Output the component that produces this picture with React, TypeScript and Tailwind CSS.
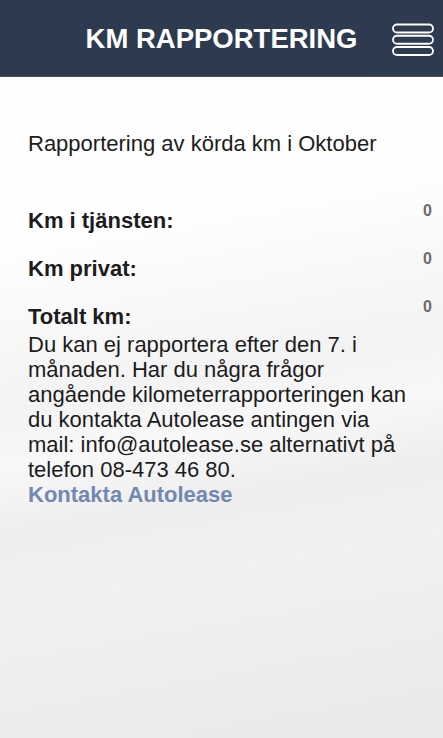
import React from "react";

function Hamburger() {
  return (
    <svg width="42" height="34" viewBox="0 0 42 34" fill="none">
      <rect x="1" y="1.5" width="40" height="8" rx="4" stroke="#ffffff" strokeWidth="1.8" />
      <rect x="1" y="12.75" width="40" height="8" rx="4" stroke="#ffffff" strokeWidth="1.8" />
      <rect x="1" y="24" width="40" height="8" rx="4" stroke="#ffffff" strokeWidth="1.8" />
    </svg>
  );
}

function Row({ label, first }: { label: string; first?: boolean }) {
  return (
    <div className={`flex items-start justify-between pr-[11px] ${first ? "" : "mt-[15px]"}`}>
      <span className="pt-[9px] text-[22px] font-bold leading-[24px] text-[#1c1c1c]">{label}</span>
      <span className="pt-[2px] text-[16px] font-bold leading-[18px] text-[#6b6b6b]">0</span>
    </div>
  );
}

export default function App() {
  return (
    <div
      className="flex min-h-screen w-full flex-col"
      style={{ fontFamily: '"Liberation Sans", Arial, sans-serif' }}
    >
      <header className="relative flex h-[77px] shrink-0 items-center justify-center border-b border-[#4b5060] bg-[#2e3a4f]">
        <h1 className="mt-[1px] text-[27.5px] font-bold leading-none text-white">KM RAPPORTERING</h1>
        <div className="absolute right-[9px] top-[23px]">
          <Hamburger />
        </div>
      </header>
      <main className="flex-1 bg-[linear-gradient(170deg,#ffffff_0%,#fdfdfd_25%,#f3f3f3_45%,#f8f8f8_53%,#eeeeee_62%,#f1f1f1_72%,#e9e9e9_100%)] pl-[28px] pt-[55px]">
        <p className="text-[22px] leading-[24px] text-[#1c1c1c]">Rapportering av körda km i Oktober</p>
        <div className="mt-[44px]">
          <Row label="Km i tjänsten:" first />
          <Row label="Km privat:" />
          <Row label="Totalt km:" />
        </div>
        <p className="mt-[3px] pr-[30px] text-[22px] leading-[25px] text-[#1c1c1c]">
          Du kan ej rapportera efter den 7. i månaden. Har du några frågor angående kilometerrapporteringen kan du
          kontakta Autolease antingen via mail: info@autolease.se alternativt på telefon 08-473 46 80.
        </p>
        <a className="block text-[22px] font-bold leading-[25px] text-[#7189b0]">Kontakta Autolease</a>
      </main>
    </div>
  );
}
